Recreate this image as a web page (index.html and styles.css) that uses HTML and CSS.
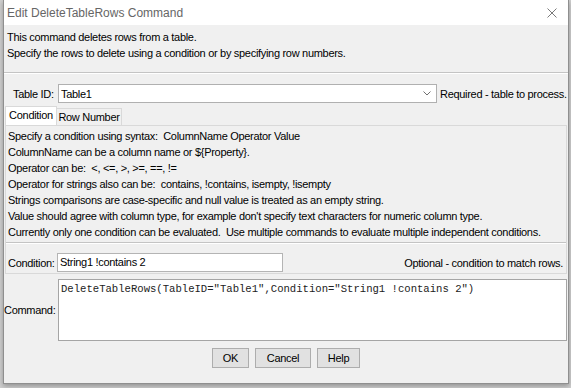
FILE: index.html
```html
<!DOCTYPE html>
<html lang="en">
<head>
    <meta charset="UTF-8">
    <title>Edit DeleteTableRows Command</title>
    <link rel="stylesheet" href="styles.css">
</head>
<body>
    <div class="dialog">
        <div class="titlebar">
            <span class="title">Edit DeleteTableRows Command</span>
            <svg class="close" width="10" height="10" viewBox="0 0 10 10">
                <path d="M0.5 0.5L9.5 9.5M9.5 0.5L0.5 9.5" stroke="#7a7a7a" stroke-width="1" fill="none"/>
            </svg>
        </div>

        <div class="content">
            <div class="intro">
                <p>This command deletes rows from a table.</p>
                <p>Specify the rows to delete using a condition or by specifying row numbers.</p>
            </div>
            <hr class="sep">

            <div class="table-row">
                <label>Table ID:</label>
                <div class="combo">
                    <span>Table1</span>
                    <svg width="8" height="5" viewBox="0 0 8 5">
                        <path d="M0.5 0.5L4 4L7.5 0.5" stroke="#707070" stroke-width="1" fill="none"/>
                    </svg>
                </div>
                <span class="note">Required - table to process.</span>
            </div>

            <div class="tabs">
                <div class="tab tab-active">Condition</div>
                <div class="tab tab-other">Row Number</div>
            </div>
            <div class="panel">
                <div class="help">
                    <p>Specify a condition using syntax:  ColumnName Operator Value</p>
                    <p>ColumnName can be a column name or ${Property}.</p>
                    <p>Operator can be:  &lt;, &lt;=, &gt;, &gt;=, ==, !=</p>
                    <p>Operator for strings also can be:  contains, !contains, isempty, !isempty</p>
                    <p>Strings comparisons are case-specific and null value is treated as an empty string.</p>
                    <p>Value should agree with column type, for example don't specify text characters for numeric column type.</p>
                    <p>Currently only one condition can be evaluated.  Use multiple commands to evaluate multiple independent conditions.</p>
                </div>
                <hr class="sep panel-sep">
                <div class="cond-row">
                    <label>Condition:</label>
                    <div class="field">String1 !contains 2</div>
                    <span class="note-right">Optional - condition to match rows.</span>
                </div>
            </div>

            <div class="command-row">
                <label>Command:</label>
                <div class="command">DeleteTableRows(TableID="Table1",Condition="String1 !contains 2")</div>
            </div>

            <div class="buttons">
                <button class="btn-ok">OK</button>
                <button class="btn-cancel">Cancel</button>
                <button class="btn-help">Help</button>
            </div>
        </div>
    </div>
</body>
</html>
```

FILE: styles.css
```css
* {
    box-sizing: border-box;
    margin: 0;
    padding: 0;
}

body {
    width: 571px;
    height: 388px;
    overflow: hidden;
    background-color: #cfcfcf;
    font-family: 'Liberation Sans', Arial, sans-serif;
    font-size: 11px;
    letter-spacing: -0.3px;
    color: #000;
}

.dialog {
    margin-left: 3px;
    width: 566px;
    height: 384px;
    border: 1px solid #8f8f8f;
    border-top: none;
    background-color: #f0f0f0;
    box-shadow: 0 2px 5px rgba(0, 0, 0, 0.3);
}

.titlebar {
    height: 25px;
    background-color: #fff;
    display: flex;
    align-items: center;
    justify-content: space-between;
    padding: 0 11px 0 3px;
}

.title {
    font-size: 12px;
    letter-spacing: 0;
    color: #666;
}

.close {
    display: block;
}

.intro {
    padding: 4px 3px 0;
    line-height: 16px;
}

.intro p, .help p {
    white-space: pre;
}

.sep {
    border: none;
    border-top: 1px solid #c4c4c4;
    border-bottom: 1px solid #fff;
    margin-top: 11px;
}

.table-row {
    display: grid;
    grid-template-columns: 45px 379px 1fr;
    align-items: center;
    margin-top: 10px;
    padding-left: 9px;
}

.combo {
    height: 19px;
    background-color: #fff;
    border: 1px solid #b0b0b0;
    display: flex;
    align-items: center;
    justify-content: space-between;
    padding: 0 5px 0 2px;
}

.combo svg {
    display: block;
}

.note {
    padding-left: 3px;
    white-space: nowrap;
}

.tabs {
    display: flex;
    align-items: flex-end;
    height: 19px;
    margin: 3px 0 0 1px;
}

.tab {
    height: 17px;
    line-height: 16px;
    text-align: center;
    border: 1px solid #d9d9d9;
    border-bottom: none;
    background-color: #f0f0f0;
}

.tab-active {
    width: 52px;
    height: 19px;
    background-color: #fff;
}

.tab-other {
    width: 66px;
    margin-left: -1px;
}

.panel {
    margin: 0 1px;
    border: 1px solid #d9d9d9;
    padding: 2px 3px 1px 2px;
}

.help {
    line-height: 16px;
}

.panel-sep {
    margin: 2px -3px 0 -2px;
}

.cond-row {
    display: grid;
    grid-template-columns: 49px 226px 1fr;
    align-items: center;
    margin-top: 9px;
}

.field {
    height: 19px;
    line-height: 17px;
    background-color: #fff;
    border: 1px solid #b4b4b4;
    padding-left: 2px;
}

.note-right {
    text-align: right;
    white-space: nowrap;
}

.command-row {
    display: grid;
    grid-template-columns: 54px 509px;
    align-items: center;
    margin-top: 5px;
}

.command-row label {
    text-align: right;
    padding-right: 4px;
}

.command {
    height: 62px;
    background-color: #fff;
    border: 1px solid #a5a5a5;
    padding: 2px 2px;
    font-family: 'Liberation Mono', 'Courier New', monospace;
    font-size: 10.6px;
    letter-spacing: 0;
    line-height: 14px;
    color: #222;
    white-space: pre;
}

.buttons {
    display: flex;
    justify-content: center;
    gap: 6px;
    margin-top: 7px;
}

.buttons button {
    height: 20px;
    background-color: #e1e1e1;
    border: 1px solid #adadad;
    font-family: 'Liberation Sans', Arial, sans-serif;
    font-size: 11px;
    letter-spacing: -0.3px;
    color: #000;
}

.btn-ok {
    width: 37px;
}

.btn-cancel {
    width: 56px;
}

.btn-help {
    width: 43px;
}
```
